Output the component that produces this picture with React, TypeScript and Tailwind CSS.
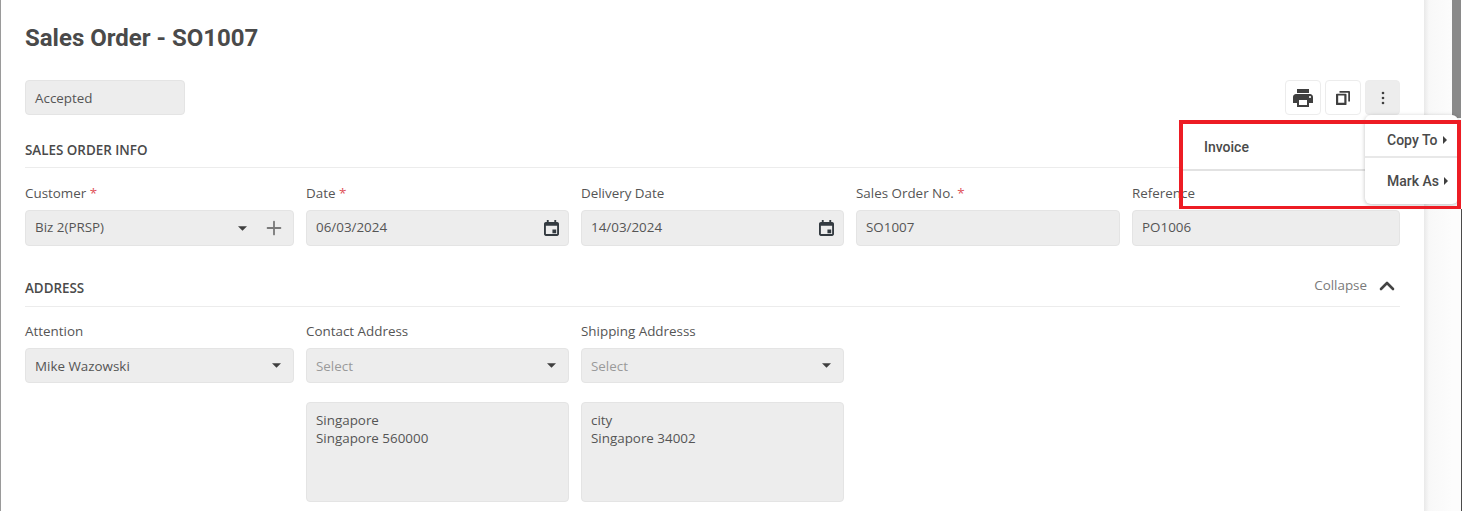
import { ChevronUp, Plus } from 'lucide-react';

const body = "font-['Open_Sans',sans-serif]";
const heading = "font-['Roboto',sans-serif]";
const columns = 'grid grid-cols-[269px_263px_263px_264px_268px] gap-x-3';
const boxBase = 'rounded-[4px] border border-[#e4e4e4] bg-[#ededed] px-[9px] text-[13.4px] text-[#555555]';

function Caret({ className = '' }: { className?: string }) {
  return (
    <svg viewBox="0 0 10 5" className={`h-[5px] w-[9px] ${className}`}>
      <path d="M0 0h10L5 5z" fill="#3f3f3f" />
    </svg>
  );
}

function CalendarIcon() {
  return (
    <svg viewBox="0 0 16 17" className="h-[16px] w-[15px]">
      <path
        fill="#333a40"
        d="M14 2h-1V0h-2v2H5V0H3v2H2C.9 2 0 2.9 0 4v11c0 1.100.9 2 2 2h12c1.100 0 2-.9 2-2V4c0-1.100-.9-2-2-2zm0 13H2V6h12v9zM9 10h4v4H9z"
      />
    </svg>
  );
}

function PrintIcon() {
  return (
    <svg viewBox="0 0 24 24" className="h-[24px] w-[24px]">
      <path
        fill="#3f3f3f"
        d="M19 8H5c-1.660 0-3 1.340-3 3v6h4v4h12v-4h4v-6c0-1.660-1.340-3-3-3zm-3 11H8v-5h8v5zm3-7c-.55 0-1-.45-1-1s.45-1 1-1 1 .45 1 1-.45 1-1 1zm-1-9H6v4h12V3z"
      />
    </svg>
  );
}

function CopyIcon() {
  return (
    <svg viewBox="0 0 16 16" className="h-[14px] w-[14px]">
      <path fill="#3f3f3f" d="M4 0h11a1 1 0 0 1 1 1v11h-2V2H4z" />
      <path fillRule="evenodd" fill="#3f3f3f" d="M1 3h10a1 1 0 0 1 1 1v11a1 1 0 0 1-1 1H1a1 1 0 0 1-1-1V4a1 1 0 0 1 1-1zm1.500 2v8.500h7V5z" />
    </svg>
  );
}

function DotsIcon() {
  return (
    <svg viewBox="0 0 4 14" className="h-[14px] w-[4px]">
      <circle cx="2" cy="2" r="1.300" fill="#3f3f3f" />
      <circle cx="2" cy="7" r="1.300" fill="#3f3f3f" />
      <circle cx="2" cy="12" r="1.300" fill="#3f3f3f" />
    </svg>
  );
}

function MenuArrow({ className = '' }: { className?: string }) {
  return (
    <svg viewBox="0 0 4 8" className={`h-[8px] w-[4px] ${className}`}>
      <path d="M0 0l4 4-4 4z" fill="#3f3f3f" />
    </svg>
  );
}

function Label({ text, required }: { text: string; required?: boolean }) {
  return (
    <div className="mb-[6px] h-[20px] text-[13.4px] leading-[18px] text-[#555555]">
      {text}
      {required && <span className="text-[#e0525a]"> *</span>}
    </div>
  );
}

function TextBox({ value, icon }: { value: string; icon?: boolean }) {
  return (
    <div className={`flex h-[36px] items-center justify-between ${boxBase}`}>
      <span className="pb-[1px]">{value}</span>
      {icon && <CalendarIcon />}
    </div>
  );
}

function SelectBox({ value, placeholder }: { value: string; placeholder?: boolean }) {
  return (
    <div className={`flex h-[35px] items-center justify-between ${boxBase}`}>
      <span className={placeholder ? 'pt-[2px] text-[#9a9a9a]' : 'pt-[2px]'}>{value}</span>
      <Caret className="mr-[3px]" />
    </div>
  );
}

function AddressBox({ lines }: { lines: string[] }) {
  return (
    <div className={`h-[100px] pt-[8px] leading-[18px] ${boxBase}`}>
      {lines.map((line) => (
        <div key={line}>{line}</div>
      ))}
    </div>
  );
}

function ActionButton({ children, active }: { children: React.ReactNode; active?: boolean }) {
  return (
    <div className={`flex h-[35px] items-center justify-center rounded-[4px] border border-[#ececec] ${active ? 'w-[35px] bg-[#ededed]' : 'w-[36px] bg-white'}`}>
      {children}
    </div>
  );
}

function OverlayMenu() {
  return (
    <>
      <div className={`absolute left-[1182px] top-[124px] flex h-[47px] w-[184px] items-center border-b-2 border-[#e2e2e2] bg-white pl-[22px] pt-[2px] text-[14px] font-medium text-[#4a4a4a] ${heading}`}>
        Invoice
      </div>
      <div className={`absolute left-[1365px] top-[115px] w-[93px] rounded-[6px] bg-white text-[14px] font-medium text-[#4a4a4a] shadow-[0_1px_4px_rgba(0,0,0,0.25)] ${heading}`}>
        <div className="flex h-[43px] items-center border-b-2 border-[#e8e8e8] pl-[22px] pt-[9px]">
          Copy To
          <MenuArrow className="ml-[6px]" />
        </div>
        <div className="flex h-[46px] items-center pl-[22px]">
          Mark As
          <MenuArrow className="ml-[5px]" />
        </div>
      </div>
      <div className="pointer-events-none absolute left-[1179px] top-[120px] h-[89px] w-[282px] border-[4px] border-b-[3px] border-[#ed1c24]" />
    </>
  );
}

export default function App() {
  return (
    <div className={`relative flex h-[511px] w-[1462px] overflow-hidden bg-white ${body}`}>
      <div className="h-full w-[1424px] shrink-0 border-l border-[#9a9a9a] pl-[24px] pr-[24px]">
        <h1 className={`mt-[23px] text-[24px] font-bold leading-[30px] text-[#4a4a4a] ${heading}`}>Sales Order - SO1007</h1>

        <div className="mt-[27px] flex items-center justify-between">
          <div className={`flex h-[35px] w-[160px] items-center pt-[2px] ${boxBase}`}>Accepted</div>
          <div className="flex gap-1">
            <ActionButton><PrintIcon /></ActionButton>
            <ActionButton><CopyIcon /></ActionButton>
            <ActionButton active><DotsIcon /></ActionButton>
          </div>
        </div>

        <div className="mt-[25px] border-b border-[#ececec] pb-[7px] text-[13.4px] font-semibold leading-[20px] text-[#4a4a4a]">
          SALES ORDER INFO
        </div>

        <div className={`mt-[16px] ${columns}`}>
          <div>
            <Label text="Customer" required />
            <div className={`flex h-[36px] items-center ${boxBase}`}>
              <span className="flex-1 pb-[1px]">Biz 2(PRSP)</span>
              <Caret className="mr-[16px]" />
              <Plus size={22} color="#7a7a7a" strokeWidth={2} className="-mr-[1px]" />
            </div>
          </div>
          <div>
            <Label text="Date" required />
            <TextBox value="06/03/2024" icon />
          </div>
          <div>
            <Label text="Delivery Date" />
            <TextBox value="14/03/2024" icon />
          </div>
          <div>
            <Label text="Sales Order No." required />
            <TextBox value="SO1007" />
          </div>
          <div>
            <Label text="Reference" />
            <TextBox value="PO1006" />
          </div>
        </div>

        <div className="mt-[30px] flex items-center justify-between border-b border-[#ececec] pb-[8px]">
          <span className="pt-[2px] text-[13.4px] font-semibold leading-[20px] text-[#4a4a4a]">ADDRESS</span>
          <span className="flex items-center text-[13.4px] text-[#7a7a7a]">
            <span className="pb-[4px] leading-[16px]">Collapse</span>
            <ChevronUp size={24} color="#444444" strokeWidth={2.600} className="-mt-[2px] ml-[8px] mr-[1px]" />
          </span>
        </div>

        <div className={`mt-[15px] ${columns}`}>
          <div>
            <Label text="Attention" />
            <SelectBox value="Mike Wazowski" />
          </div>
          <div>
            <Label text="Contact Address" />
            <SelectBox value="Select" placeholder />
            <div className="mt-[19px]">
              <AddressBox lines={['Singapore', 'Singapore 560000']} />
            </div>
          </div>
          <div>
            <Label text="Shipping Addresss" />
            <SelectBox value="Select" placeholder />
            <div className="mt-[19px]">
              <AddressBox lines={['city', 'Singapore 34002']} />
            </div>
          </div>
        </div>
      </div>

      <div className="relative h-full w-[37px] shrink-0 bg-[linear-gradient(90deg,#e9e9e9,#f8f8f8_5px,#fcfcfc_28px)]">
        <div className="absolute right-0 top-0 h-[118px] w-[9px] bg-[#8a8a8a]" />
      </div>
      <div className="flex h-full w-[1px] shrink-0 flex-col">
        <div className="h-[209px] bg-white" />
        <div className="flex-1 bg-[#4a4a4a]" />
      </div>

      <OverlayMenu />
    </div>
  );
}
